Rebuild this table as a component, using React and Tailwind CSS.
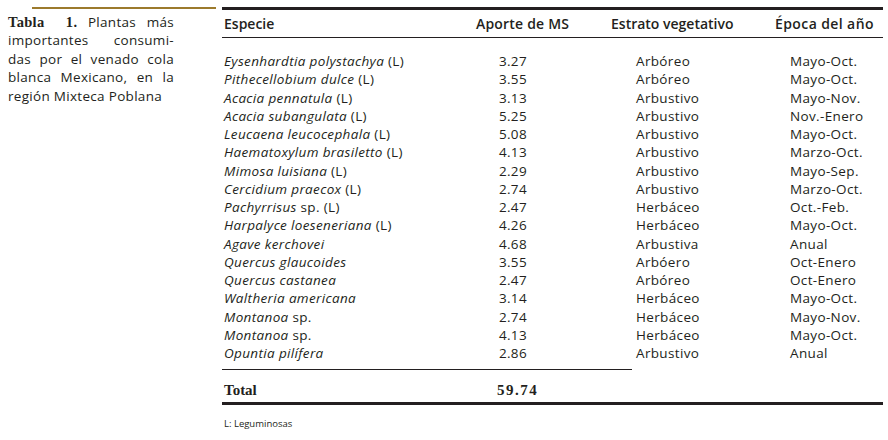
import React from "react";

const rows = [
  ["Eysenhardtia polystachya", " (L)", "3.27", "Arbóreo", "Mayo-Oct."],
  ["Pithecellobium dulce", " (L)", "3.55", "Arbóreo", "Mayo-Oct."],
  ["Acacia pennatula", " (L)", "3.13", "Arbustivo", "Mayo-Nov."],
  ["Acacia subangulata", " (L)", "5.25", "Arbustivo", "Nov.-Enero"],
  ["Leucaena leucocephala", " (L)", "5.08", "Arbustivo", "Mayo-Oct."],
  ["Haematoxylum brasiletto", " (L)", "4.13", "Arbustivo", "Marzo-Oct."],
  ["Mimosa luisiana", " (L)", "2.29", "Arbustivo", "Mayo-Sep."],
  ["Cercidium praecox", " (L)", "2.74", "Arbustivo", "Marzo-Oct."],
  ["Pachyrrisus", " sp. (L)", "2.47", "Herbáceo", "Oct.-Feb."],
  ["Harpalyce loeseneriana", " (L)", "4.26", "Herbáceo", "Mayo-Oct."],
  ["Agave kerchovei", "", "4.68", "Arbustiva", "Anual"],
  ["Quercus glaucoides", "", "3.55", "Arbóero", "Oct-Enero"],
  ["Quercus castanea", "", "2.47", "Arbóreo", "Oct-Enero"],
  ["Waltheria americana", "", "3.14", "Herbáceo", "Mayo-Oct."],
  ["Montanoa", " sp.", "2.74", "Herbáceo", "Mayo-Nov."],
  ["Montanoa", " sp.", "4.13", "Herbáceo", "Mayo-Oct."],
  ["Opuntia pilífera", "", "2.86", "Arbustivo", "Anual"],
];

const sans = { fontFamily: '"Open Sans", "Noto Sans", sans-serif' };
const serif = { fontFamily: '"Liberation Serif", "DejaVu Serif", serif' };

export default function App() {
  return (
    <div className="w-[888px] h-[440px] bg-white text-[#231f20] pt-[7px]" style={sans}>
      <div className="flex items-start">
        <div className="w-[222px] shrink-0 pl-[8px]">
          <div className="flex">
            <div className="w-[24px] shrink-0" />
            <div className="w-[184px] h-[2px] bg-[#9c7a2c]" />
          </div>
          <div className="w-[166px] pt-[4px] text-[13.5px] leading-[18.4px] tracking-[0.3px]">
            <p className="text-justify [text-align-last:justify]">
              <b className="font-bold text-[14.5px]" style={serif}>Tabla&nbsp;&nbsp;1.</b> Plantas más
            </p>
            <p className="text-justify [text-align-last:justify]">importantes consumi-</p>
            <p className="text-justify [text-align-last:justify]">das por el venado cola</p>
            <p className="text-justify [text-align-last:justify]">blanca Mexicano, en la</p>
            <p>región Mixteca Poblana</p>
          </div>
        </div>
        <div className="w-[661px] shrink-0">
          <div className="h-[3px] bg-[#231f20]" />
          <div className="h-[28px] flex items-center border-b border-[#231f20] text-[14px] font-semibold">
            <div className="w-[254px] pl-[2px]">Especie</div>
            <div className="w-[135px] tracking-[0.2px]">Aporte de MS</div>
            <div className="w-[164px]">Estrato vegetativo</div>
            <div className="tracking-[0.4px]">Época del año</div>
          </div>
          <div className="pt-[14px] text-[13.5px] leading-[18.25px] tracking-[0.35px]">
            {rows.map((r, i) => (
              <div key={i} className="flex h-[18.25px]">
                <div className="w-[254px] pl-[2px]">
                  <span className="italic">{r[0]}</span>
                  {r[1]}
                </div>
                <div className="w-[135px]">
                  <div className="w-[51px] text-right">{r[2]}</div>
                </div>
                <div className="w-[164px] pl-[25px]">{r[3]}</div>
                <div className="pl-[15px]">{r[4]}</div>
              </div>
            ))}
          </div>
          <div className="mt-[7px] w-[410px] h-px bg-[#231f20]" />
          <div className="h-[32px] flex items-end pb-[3px] font-bold text-[15px] leading-[17px]" style={serif}>
            <div className="w-[275px] pl-[2px]">Total</div>
            <div className="tracking-[1.5px]">59.74</div>
          </div>
          <div className="h-[3px] bg-[#231f20]" />
          <div className="mt-[12px] pl-[2px] text-[9.5px]">L: Leguminosas</div>
        </div>
      </div>
    </div>
  );
}
